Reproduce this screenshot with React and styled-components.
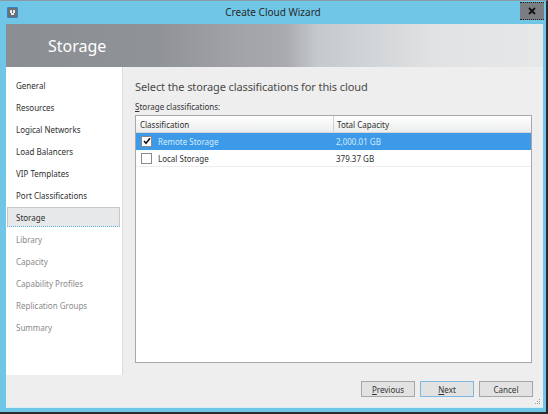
import React from "react";
import styled, { createGlobalStyle } from "styled-components";

const Global = createGlobalStyle`
  html, body { margin: 0; padding: 0; }
  body {
    width: 548px;
    height: 414px;
    overflow: hidden;
    font-family: "Noto Sans", "Open Sans", sans-serif;
  }
`;

const Window = styled.div`
  width: 548px;
  height: 414px;
  box-sizing: border-box;
  background: #6fc6e7;
  border-top: 1px solid #8a9aa3;
  border-right: 2px solid #2b2b2b;
  border-bottom: 2px solid #2b2b2b;
  display: flex;
  flex-direction: column;
`;

const TitleBar = styled.div`
  height: 23px;
  display: flex;
  align-items: center;
  padding-left: 7px;
`;

const TitleText = styled.div`
  flex: 1;
  text-align: center;
  font-size: 10px;
  color: #2a2a2a;
  padding-left: 8px;
  margin-top: -2px;
`;

const AppIcon = styled.div`
  width: 9px;
  height: 9px;
  border: 1px solid #3b7fc0;
  background: #6b6e73;
  border-radius: 1px;
  display: flex;
  align-items: center;
  justify-content: center;
`;

const CloseButton = styled.div`
  width: 24px;
  height: 16px;
  margin: -4px 2px 0 0;
  background: #7a7d81;
  border-top: 1px dotted #222;
  border-bottom: 1px dotted #222;
  display: flex;
  align-items: center;
  justify-content: center;
`;

const Client = styled.div`
  flex: 1;
  margin: 0 3px 4px 6px;
  display: flex;
  flex-direction: column;
  background: #eeeeee;
  border-bottom: 1px solid #d6eef8;
`;

const Header = styled.div`
  height: 43px;
  background: linear-gradient(
    to right,
    #8a8d92 0%,
    #8f9296 28%,
    #a3a5a9 45%,
    #a8aaae 52%,
    #c6c9cc 58%,
    #d2d5d7 68%,
    #e0e2e4 80%,
    #e6e8ea 100%
  );
  display: flex;
  align-items: center;
  padding-left: 42px;
  font-size: 16px;
  color: #ffffff;
`;

const Main = styled.div`
  height: 308px;
  display: flex;
`;

const Nav = styled.div`
  width: 116px;
  background: #ffffff;
  padding-top: 8px;
  box-sizing: border-box;
  display: flex;
  flex-direction: column;
`;

const NavItem = styled.div`
  height: 20px;
  margin: 0 2px 2px 1px;
  padding-left: 8px;
  font-size: 8px;
  line-height: 19px;
  color: ${(p) => (p.$disabled ? "#8a8a8a" : "#2f2f2f")};
  box-sizing: border-box;
  border: 1px solid ${(p) => (p.$active ? "#c4c6c8" : "transparent")};
  background: ${(p) => (p.$active ? "#e7e8e9" : "transparent")};
  ${(p) => p.$active && "border-bottom: 1px dotted #5aaedc;"}
`;

const Content = styled.div`
  flex: 1;
  border-left: 1px solid #dcdcdc;
  padding: 12px 11px 0 12px;
  display: flex;
  flex-direction: column;
`;

const Heading = styled.div`
  font-size: 11px;
  color: #4a4a4a;
  line-height: 16px;
  letter-spacing: -0.1px;
`;

const Label = styled.div`
  margin-top: 6px;
  font-size: 8px;
  color: #333;
  line-height: 12px;
  u { text-decoration: underline; }
`;

const Table = styled.div`
  margin-top: 2px;
  height: 248px;
  box-sizing: border-box;
  border: 1px solid #a9a9a9;
  background: #ffffff;
  display: flex;
  flex-direction: column;
`;

const Row = styled.div`
  display: grid;
  grid-template-columns: 197px 1fr;
  height: 17px;
  box-sizing: border-box;
  font-size: 8px;
  align-items: center;
  color: ${(p) => (p.$selected ? "#d4ecfc" : "#2f2f2f")};
  background: ${(p) =>
    p.$head
      ? "linear-gradient(#ffffff, #eceded)"
      : p.$selected
      ? "#3d9ae8"
      : "#ffffff"};
  border-bottom: 1px solid ${(p) => (p.$head ? "#d5d5d5" : p.$selected ? "#3d9ae8" : "#ececec")};
`;

const Cell = styled.div`
  display: flex;
  align-items: center;
  gap: 6px;
  padding-left: ${(p) => (p.$first ? "5px" : "3px")};
  height: 100%;
  ${(p) => p.$divider && "border-left: 1px solid #d2d2d2;"}
  ${(p) => p.$head && "padding-left: 4px;"}
`;

const Check = styled.div`
  width: 9px;
  height: 9px;
  border: 1px solid #8a8a8a;
  background: #ffffff;
  display: flex;
  align-items: center;
  justify-content: center;
`;

const ButtonBar = styled.div`
  flex: 1;
  display: flex;
  justify-content: flex-end;
  align-items: flex-start;
  padding: 6px 10px 0 0;
  gap: 5px;
  position: relative;
`;

const Button = styled.div`
  width: 54px;
  height: 16px;
  box-sizing: border-box;
  border: 1px solid ${(p) => (p.$default ? "#7fb7de" : "#a6a6a6")};
  background: #e2e2e2;
  font-size: 8px;
  color: #333;
  display: flex;
  align-items: center;
  justify-content: center;
  u { text-decoration: underline; }
`;

const Grip = styled.svg`
  position: absolute;
  right: 2px;
  bottom: 2px;
`;

const steps = [
  { name: "General" },
  { name: "Resources" },
  { name: "Logical Networks" },
  { name: "Load Balancers" },
  { name: "VIP Templates" },
  { name: "Port Classifications" },
  { name: "Storage", active: true },
  { name: "Library", disabled: true },
  { name: "Capacity", disabled: true },
  { name: "Capability Profiles", disabled: true },
  { name: "Replication Groups", disabled: true },
  { name: "Summary", disabled: true },
];

const storage = [
  { name: "Remote Storage", capacity: "2,000.01 GB", checked: true },
  { name: "Local Storage", capacity: "379.37 GB", checked: false },
];

const App = () => {
  return (
    <>
      <Global />
      <Window>
        <TitleBar>
          <AppIcon>
            <svg width="7" height="7" viewBox="0 0 7 7">
              <rect x="1" y="1" width="2" height="3" fill="#e8e8e8" />
              <rect x="4" y="1" width="2" height="3" fill="#e8e8e8" />
              <rect x="2" y="4" width="3" height="2" fill="#e8e8e8" />
            </svg>
          </AppIcon>
          <TitleText>Create Cloud Wizard</TitleText>
          <CloseButton>
            <svg width="8" height="8" viewBox="0 0 8 8">
              <path d="M1 1 L7 7 M7 1 L1 7" stroke="#111" strokeWidth="1.8" />
            </svg>
          </CloseButton>
        </TitleBar>
        <Client>
          <Header>Storage</Header>
          <Main>
            <Nav>
              {steps.map((s) => (
                <NavItem key={s.name} $active={s.active} $disabled={s.disabled}>
                  {s.name}
                </NavItem>
              ))}
            </Nav>
            <Content>
              <Heading>Select the storage classifications for this cloud</Heading>
              <Label>
                <u>S</u>torage classifications:
              </Label>
              <Table>
                <Row $head>
                  <Cell $head>Classification</Cell>
                  <Cell $divider>Total Capacity</Cell>
                </Row>
                {storage.map((r) => (
                  <Row key={r.name} $selected={r.checked}>
                    <Cell $first>
                      <Check>
                        {r.checked && (
                          <svg width="8" height="8" viewBox="0 0 8 8">
                            <path d="M1 4 L3 6.3 L7 1.2" stroke="#111" strokeWidth="1.6" fill="none" />
                          </svg>
                        )}
                      </Check>
                      {r.name}
                    </Cell>
                    <Cell>{r.capacity}</Cell>
                  </Row>
                ))}
              </Table>
            </Content>
          </Main>
          <ButtonBar>
            <Button>
              <u>P</u>revious
            </Button>
            <Button $default>
              <u>N</u>ext
            </Button>
            <Button>Cancel</Button>
            <Grip width="6" height="6" viewBox="0 0 6 6">
              <rect x="4" y="0" width="1" height="1" fill="#999" />
              <rect x="2" y="2" width="1" height="1" fill="#999" />
              <rect x="4" y="2" width="1" height="1" fill="#999" />
              <rect x="0" y="4" width="1" height="1" fill="#999" />
              <rect x="2" y="4" width="1" height="1" fill="#999" />
              <rect x="4" y="4" width="1" height="1" fill="#999" />
            </Grip>
          </ButtonBar>
        </Client>
      </Window>
    </>
  );
};

export default App;
